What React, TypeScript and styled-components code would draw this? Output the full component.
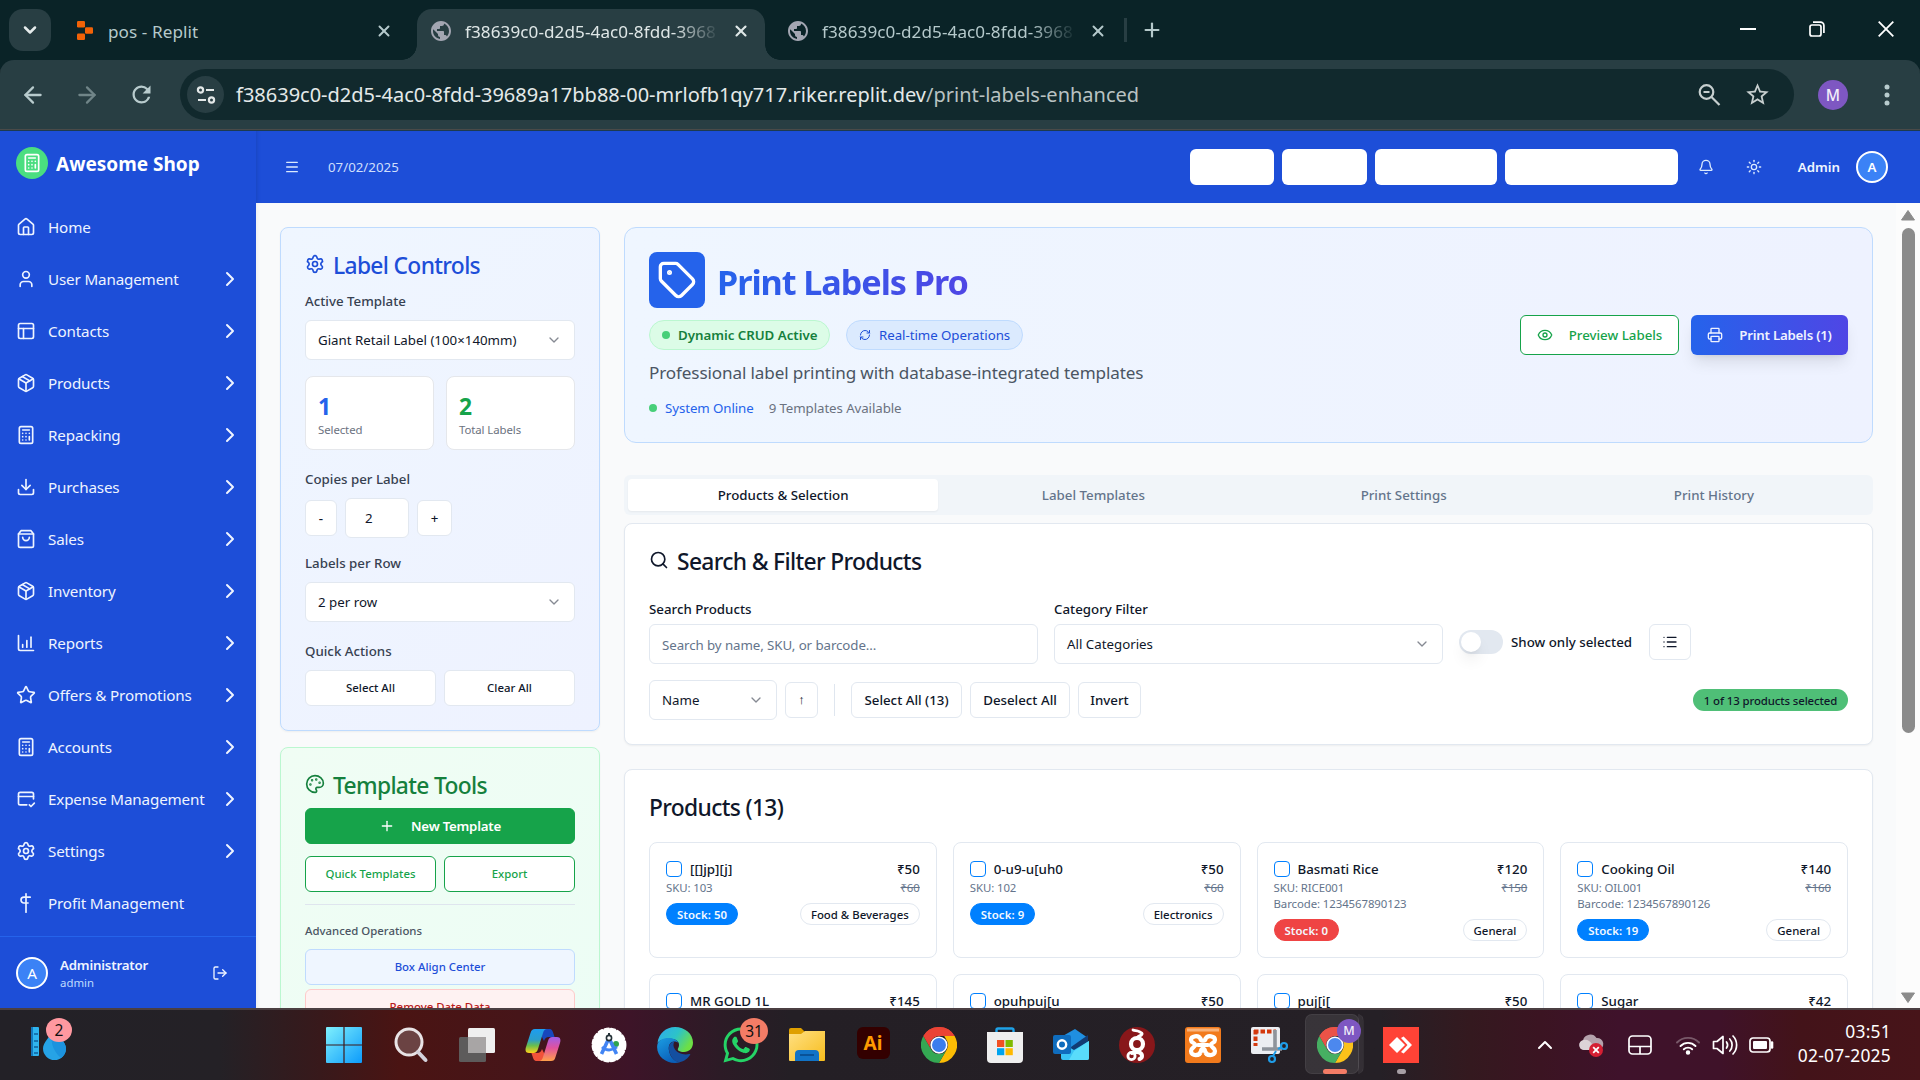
import React from "react";
import styled, { createGlobalStyle, css } from "styled-components";
import {
  House, User, PanelsTopLeft, Package, Calculator, Download, ChartColumnIncreasing, Star, Settings, LogOut,
  ChevronRight, ChevronDown, ChevronUp, Bell, Sun, Menu, Palette, Plus, Tag, RefreshCw, Eye, Printer, Search, List,
  ArrowLeft, ArrowRight, X,
} from "lucide-react";
import { FaWhatsapp } from "react-icons/fa";
import { MdStarBorder, MdRefresh, MdPublic } from "react-icons/md";

const Global = createGlobalStyle`
  *, *::before, *::after { box-sizing: border-box; }
  body { margin: 0; overflow: hidden; }
  #root { font-family: "Noto Sans", "Open Sans", "DejaVu Sans", sans-serif; }
  svg { display: block; flex-shrink: 0; }
`;

const Screen = styled.div`
  width: 1920px;
  height: 1080px;
  display: flex;
  flex-direction: column;
  overflow: hidden;
  white-space: nowrap;
  font-size: 13.3px;
  line-height: 20px;
  color: #0f172a;
`;

/* ---------- browser ---------- */

const TabStrip = styled.div`
  height: 60px;
  background: #0a2327;
  display: flex;
  align-items: flex-start;
  padding-left: 9px;
  color: #b5c9cb;
`;
const TabSearch = styled.div`
  width: 42px;
  height: 42px;
  margin: 9px 17px 0 0;
  border-radius: 14px;
  background: #283e43;
  color: #e6ecec;
  display: flex;
  align-items: center;
  justify-content: center;
`;
const Tab = styled.div<{ $w: number; $pad: number; $end: number; $gap?: number; $active?: boolean }>`
  position: relative;
  width: ${(p) => p.$w}px;
  height: 51px;
  margin-top: 9px;
  padding: 0 ${(p) => p.$end}px 8px ${(p) => p.$pad}px;
  display: flex;
  align-items: center;
  gap: ${(p) => p.$gap ?? 12}px;
  font-size: 17.1px;
  ${(p) => p.$active && css`
    background: #283e43;
    color: #dfe7e7;
    border-radius: 15px 15px 0 0;
    &::before, &::after {
      content: "";
      position: absolute;
      bottom: 0;
      width: 15px;
      height: 15px;
    }
    &::before { left: -15px; background: radial-gradient(circle at 0 0, transparent 14.5px, #283e43 15px); }
    &::after { right: -15px; background: radial-gradient(circle at 100% 0, transparent 14.5px, #283e43 15px); }
  `}
`;
const TabTitle = styled.span<{ $fade?: boolean }>`
  flex: 1;
  overflow: hidden;
  padding-top: 2px;
  line-height: 26px;
  letter-spacing: 0.005em;
  ${(p) => p.$fade && css`mask-image: linear-gradient(90deg, #000 calc(100% - 46px), transparent 100%);`}
`;
const TabDivider = styled.div`
  width: 3px;
  height: 24px;
  margin: 18px 0 0 9px;
  background: #283e43;
`;
const NewTab = styled.div`
  margin: 19px 0 0 14px;
`;
const WindowControls = styled.div`
  margin: 18px 26px 0 auto;
  display: flex;
  align-items: center;
  height: 22px;
  gap: 53px;
  color: #fff;
`;

const ToolbarBack = styled.div`
  height: 71px;
  background: #0a2327;
`;
const Toolbar = styled.div`
  height: 71px;
  background: #283e43;
  border-radius: 14px 14px 0 0;
  border-bottom: 1px solid #1d3a50;
  box-shadow: inset 0 -1px 0 #4a4a48;
  display: flex;
  align-items: flex-start;
  padding: 9px 0 0 22px;
  color: #b8cbcd;
`;
const NavButton = styled.div<{ $ml?: number; $dim?: boolean }>`
  width: 22px;
  height: 51px;
  margin-left: ${(p) => p.$ml ?? 0}px;
  display: flex;
  align-items: center;
  justify-content: center;
  opacity: ${(p) => (p.$dim ? 0.5 : 1)};
`;
const Omnibox = styled.div`
  width: 1614px;
  height: 51px;
  margin-left: 28px;
  padding: 0 23px 0 7px;
  border-radius: 26px;
  background: #11292d;
  display: flex;
  align-items: center;
  font-size: 20px;
  color: #e4e9e9;
`;
const SiteChip = styled.div`
  width: 37px;
  height: 37px;
  margin-right: 12px;
  border-radius: 50%;
  background: #283e43;
  display: flex;
  align-items: center;
  justify-content: center;
`;
const UrlPath = styled.span`
  flex: 1;
  color: #b9c2c2;
`;
const OmniIcons = styled.div`
  display: flex;
  align-items: center;
  gap: 23px;
  color: #c7cfcf;
`;
const ProfileDot = styled.div<{ $size: number }>`
  width: ${(p) => p.$size}px;
  height: ${(p) => p.$size}px;
  border-radius: 50%;
  background: #7e57c2;
  color: #f3effa;
  font-size: ${(p) => p.$size * 0.52}px;
  font-weight: 500;
  display: flex;
  align-items: center;
  justify-content: center;
`;
const ProfileSlot = styled.div`
  margin: 11px 0 0 24px;
`;
const KebabSlot = styled.div`
  margin: 14px 0 0 36px;
`;

/* ---------- application shell ---------- */

const Page = styled.div`
  height: 877px;
  display: flex;
  overflow: hidden;
`;
const Sidebar = styled.aside`
  width: 256px;
  background: #1d4ed8;
  color: #eef4ff;
  display: flex;
  flex-direction: column;
`;
const Brand = styled.div`
  height: 64px;
  padding: 0 16px;
  display: flex;
  align-items: center;
  gap: 8px;
  color: #fff;
  font-size: 19px;
  font-weight: 700;
`;
const BrandName = styled.span`
  padding-top: 2px;
`;
const BrandMark = styled.div`
  width: 32px;
  height: 32px;
  border-radius: 50%;
  background: #4ade80;
  display: flex;
  align-items: center;
  justify-content: center;
`;
const Nav = styled.nav`
  flex: 1;
  padding-top: 6px;
`;
const NavItem = styled.div`
  height: 52px;
  padding: 0 14px 0 16px;
  display: flex;
  align-items: center;
  gap: 12px;
  font-size: 15.2px;
  letter-spacing: -0.01em;
`;
const NavLabel = styled.span`
  flex: 1;
  width: 0;
`;
const UserBox = styled.div`
  height: 72px;
  border-top: 1px solid #2563eb;
  padding: 1px 28px 0 16px;
  display: flex;
  align-items: center;
  gap: 12px;
`;
const UserText = styled.div`
  flex: 1;
`;
const UserName = styled.div`
  font-weight: 600;
  letter-spacing: -0.015em;
  line-height: 20px;
`;
const UserRole = styled.div`
  font-size: 11.4px;
  line-height: 16px;
  color: #bfdbfe;
`;
const Avatar = styled.div<{ $bold?: boolean }>`
  width: 32px;
  height: 32px;
  border-radius: 50%;
  border: 2px solid #fff;
  background: #3b82f6;
  color: #fff;
  font-size: ${(p) => (p.$bold ? 13.3 : 15.2)}px;
  font-weight: ${(p) => (p.$bold ? 600 : 400)};
  display: flex;
  align-items: center;
  justify-content: center;
`;
const Main = styled.div`
  width: 1664px;
  display: flex;
  flex-direction: column;
`;
const TopBar = styled.header`
  height: 72px;
  flex-shrink: 0;
  background: #1d4ed8;
  box-shadow: inset 4px 0 4px -3px rgba(0, 0, 0, 0.12);
  display: flex;
  align-items: center;
  padding: 0 32px 0 28px;
  color: #dbeafe;
`;
const DateText = styled.span`
  margin-left: 28px;
  flex: 1;
  color: #cfdffc;
`;
const BlankButtons = styled.div`
  display: flex;
  gap: 8px;
  margin-right: 20px;
`;
const BlankButton = styled.div<{ $w: number }>`
  width: ${(p) => p.$w}px;
  height: 36px;
  border-radius: 6px;
  background: #fff;
`;
const TopIcons = styled.div`
  display: flex;
  gap: 32px;
  margin-right: 36px;
`;
const AdminName = styled.span`
  font-weight: 600;
  margin-right: 16px;
  color: #eff6ff;
`;
const Body = styled.div`
  flex: 1;
  min-height: 0;
  display: flex;
  background: #f9fafb;
`;
const Content = styled.div`
  width: 1640px;
  padding: 24px 23px 0 24px;
  display: flex;
  gap: 24px;
  align-items: flex-start;
  box-shadow: inset 3px 0 4px -2px rgba(0, 0, 0, 0.06);
`;
const Scrollbar = styled.div`
  width: 24px;
  padding: 6px 0 4px;
  background: #fcfcfc;
  display: flex;
  flex-direction: column;
  align-items: center;
`;
const Thumb = styled.div`
  width: 13px;
  height: 505px;
  margin: 7px 0 auto;
  border-radius: 7px;
  background: #8b8b8b;
`;

/* ---------- left column ---------- */

const LeftColumn = styled.div`
  width: 320px;
  display: flex;
  flex-direction: column;
  gap: 16px;
`;
const tones = {
  blue: css`border-color: #bfdbfe; background: linear-gradient(135deg, #eff6ff, #eef2ff);`,
  green: css`border-color: #bbf7d0; background: linear-gradient(135deg, #f0fdf4, #ecfdf5);`,
  plain: css`border-color: #e2e8f0; background: #fff;`,
};
const Card = styled.section<{ $tone: keyof typeof tones; $h: number; $mt?: number }>`
  height: ${(p) => p.$h}px;
  margin-top: ${(p) => p.$mt ?? 0}px;
  padding: 24px;
  border: 1px solid;
  border-radius: 8px;
  box-shadow: 0 1px 2px rgba(0, 0, 0, 0.05);
  ${(p) => tones[p.$tone]}
`;
const CardTitle = styled.h2<{ $color?: string }>`
  margin: 0;
  height: 24px;
  padding-top: 4px;
  display: flex;
  align-items: center;
  gap: 8px;
  font-size: 22.8px;
  line-height: 24px;
  font-weight: 500;
  letter-spacing: -0.029em;
  color: ${(p) => p.$color ?? "#0f172a"};
  svg { margin-bottom: 4px; }
`;
const FieldLabel = styled.div<{ $mt: number; $dark?: boolean; $mb?: number }>`
  margin: ${(p) => p.$mt}px 0 ${(p) => p.$mb ?? 9}px;
  font-weight: 500;
  color: ${(p) => (p.$dark ? "#0f172a" : "#374151")};
`;
const SmallLabel = styled.div`
  margin: 17px 0 9px;
  font-size: 11.4px;
  line-height: 18px;
  font-weight: 500;
  color: #4b5563;
`;
const Select = styled.div<{ $w?: string }>`
  width: ${(p) => p.$w ?? "100%"};
  height: 40px;
  padding: 0 12px;
  border: 1px solid #e2e8f0;
  border-radius: 6px;
  background: #fff;
  display: flex;
  align-items: center;
  justify-content: space-between;
  svg { opacity: 0.5; }
`;
const TextInput = styled(Select)`
  color: #64748b;
  padding-top: 2px;
  letter-spacing: -0.006em;
`;
const CountInput = styled(Select)`
  padding-left: 19px;
`;
const Pair = styled.div<{ $gap: number; $mt?: number }>`
  display: grid;
  grid-template-columns: 1fr 1fr;
  gap: ${(p) => p.$gap}px;
  margin-top: ${(p) => p.$mt ?? 0}px;
`;
const Stat = styled.div`
  height: 74px;
  padding: 16px 12px 0;
  border: 1px solid #e5e7eb;
  border-radius: 8px;
  background: #fff;
`;
const StatValue = styled.div<{ $color: string }>`
  font-size: 22.8px;
  line-height: 28px;
  font-weight: 700;
  color: ${(p) => p.$color};
`;
const StatName = styled.div`
  font-size: 11.4px;
  line-height: 18px;
  letter-spacing: -0.007em;
  color: #6b7280;
`;
const Stepper = styled.div`
  display: flex;
  align-items: center;
  gap: 8px;
`;
const buttonTones = {
  plain: css`border-color: #e2e8f0; background: #fff; color: #0f172a;`,
  outlineGreen: css`border-color: #16a34a; background: #fff; color: #16a34a;`,
  green: css`border-color: #16a34a; background: #16a34a; color: #fff;`,
  blueSoft: css`border-color: #bfdbfe; background: #eff6ff; color: #1d4ed8;`,
  redSoft: css`border-color: #fecaca; background: #fef2f2; color: #b91c1c;`,
  gradient: css`
    border: 0;
    color: #eef2ff;
    background: linear-gradient(90deg, #2563eb, #4f46e5);
    box-shadow: 0 10px 15px -3px rgba(0, 0, 0, 0.1), 0 4px 6px -4px rgba(0, 0, 0, 0.1);
  `,
};
const Button = styled.div<{ $tone?: keyof typeof buttonTones; $w?: number; $h?: number; $mt?: number; $small?: boolean; $weight?: number }>`
  ${(p) => p.$w && css`width: ${p.$w}px;`}
  height: ${(p) => p.$h ?? 36}px;
  margin-top: ${(p) => p.$mt ?? 0}px;
  border: 1px solid;
  border-radius: 6px;
  display: flex;
  align-items: center;
  justify-content: center;
  gap: 16px;
  font-size: ${(p) => (p.$small ? 11.4 : 13.3)}px;
  font-weight: ${(p) => p.$weight ?? 500};
  ${(p) => p.$weight === 600 && css`letter-spacing: -0.018em;`}
  ${(p) => buttonTones[p.$tone ?? "plain"]}
`;
const SortArrow = styled.span`
  font-family: "Liberation Sans", sans-serif;
  font-size: 13px;
`;
const Rule = styled.div`
  height: 1px;
  margin-top: 12px;
  background: #dfe5ee;
`;

/* ---------- right column ---------- */

const RightColumn = styled.div`
  width: 1249px;
`;
const Hero = styled.section`
  height: 216px;
  padding: 24px;
  border: 1px solid #bfdbfe;
  border-radius: 12px;
  background: linear-gradient(90deg, #eff6ff, #eef2ff);
  display: flex;
  align-items: center;
  justify-content: space-between;
`;
const HeroText = styled.div`
  align-self: flex-start;
`;
const HeroHead = styled.div`
  display: flex;
  align-items: center;
  gap: 12px;
`;
const HeroMark = styled.div`
  width: 56px;
  height: 56px;
  border-radius: 8px;
  background: #2563eb;
  color: #fff;
  display: flex;
  align-items: center;
  justify-content: center;
`;
const HeroTitle = styled.h1`
  margin: 0;
  padding-top: 4px;
  font-size: 34.2px;
  line-height: 44px;
  font-weight: 700;
  letter-spacing: -0.031em;
  background: linear-gradient(90deg, #2563eb, #4f46e5);
  background-clip: text;
  color: transparent;
`;
const HeroBadges = styled.div`
  display: flex;
  gap: 16px;
  margin-top: 12px;
`;
const HeroBadge = styled.div<{ $w: number; $kind: "green" | "blue" }>`
  width: ${(p) => p.$w}px;
  height: 30px;
  padding-left: 12px;
  border: 1px solid;
  border-radius: 15px;
  display: flex;
  align-items: center;
  gap: 8px;
  ${(p) => p.$kind === "green"
    ? css`background: #dcfce7; border-color: #bbf7d0; color: #15803d; font-weight: 600; letter-spacing: -0.002em;`
    : css`background: #dbeafe; border-color: #bfdbfe; color: #1d4ed8; letter-spacing: -0.004em;`}
`;
const Dot = styled.span`
  width: 8px;
  height: 8px;
  border-radius: 50%;
  background: #48cf79;
`;
const Tagline = styled.p`
  margin: 9px 0 11px;
  font-size: 17.1px;
  line-height: 28px;
  letter-spacing: -0.007em;
  color: #4b5563;
`;
const Status = styled.div`
  display: flex;
  align-items: center;
  gap: 8px;
  letter-spacing: -0.007em;
  color: #2563eb;
`;
const StatusNote = styled.span`
  margin-left: 7px;
  color: #6b7280;
`;
const HeroActions = styled.div`
  display: flex;
  gap: 12px;
`;
const Tabs = styled.div`
  margin: 32px 0 8px;
  height: 40px;
  padding: 4px;
  border-radius: 6px;
  background: #f1f5f9;
  display: grid;
  grid-template-columns: repeat(4, 1fr);
`;
const TabButton = styled.div<{ $on?: boolean }>`
  display: flex;
  align-items: center;
  justify-content: center;
  border-radius: 4px;
  font-weight: 500;
  color: ${(p) => (p.$on ? "#0f172a" : "#64748b")};
  ${(p) => p.$on && css`background: #fff; box-shadow: 0 1px 2px rgba(0, 0, 0, 0.05);`}
`;
const FilterGrid = styled.div`
  display: grid;
  grid-template-columns: repeat(3, 1fr);
  gap: 16px;
`;
const Field = styled.div``;
const ToggleRow = styled.div`
  height: 36px;
  margin-top: 52px;
  display: flex;
  align-items: center;
  font-weight: 500;
`;
const Switch = styled.div`
  width: 44px;
  height: 24px;
  margin-right: 8px;
  padding: 2px;
  border-radius: 12px;
  background: #e2e8f0;
`;
const Knob = styled.div`
  width: 20px;
  height: 20px;
  border-radius: 50%;
  background: #fff;
  box-shadow: 0 10px 15px -3px rgba(0, 0, 0, 0.1), 0 4px 6px -4px rgba(0, 0, 0, 0.1);
`;
const ToggleText = styled.span`
  width: 138px;
`;
const SortRow = styled.div`
  margin-top: 16px;
  display: flex;
  align-items: center;
  gap: 8px;
`;
const VRule = styled.div`
  width: 1px;
  height: 32px;
  margin: 0 8px;
  background: #dfe6ef;
`;
const CountBadge = styled.div`
  width: 155px;
  height: 22px;
  margin-left: auto;
  border-radius: 11px;
  background: #4fbf77;
  font-size: 11.4px;
  font-weight: 500;
  letter-spacing: -0.009em;
  padding-top: 1px;
  display: flex;
  align-items: center;
  justify-content: center;
`;
const ProductGrid = styled.div`
  margin-top: 24px;
  display: grid;
  grid-template-columns: repeat(4, 1fr);
  grid-auto-rows: 116px;
  gap: 16px;
`;
const Product = styled.article`
  padding: 16px;
  border: 1px solid #e2e8f0;
  border-radius: 8px;
`;
const ProductHead = styled.div`
  display: flex;
  align-items: center;
  font-weight: 500;
`;
const Checkbox = styled.span`
  width: 16px;
  height: 16px;
  margin-right: 8px;
  border: 1px solid #0080ff;
  border-radius: 4px;
`;
const Price = styled.span`
  margin-left: auto;
`;
const ProductMeta = styled.div`
  display: flex;
  justify-content: space-between;
  font-size: 11.4px;
  height: 16px;
  padding-top: 1px;
  line-height: 16px;
  letter-spacing: -0.007em;
  color: #64748b;
`;
const ProductBadges = styled.div`
  margin-top: 8px;
  display: flex;
  justify-content: space-between;
`;
const Pill = styled.span<{ $bg?: string }>`
  height: 22px;
  padding: 0 10px;
  border: 1px solid ${(p) => p.$bg ?? "#e2e8f0"};
  border-radius: 11px;
  background: ${(p) => p.$bg ?? "#fff"};
  color: ${(p) => (p.$bg ? "#f3f8ff" : "#0f172a")};
  font-size: 11.4px;
  line-height: 21px;
  letter-spacing: ${(p) => (p.$bg ? "0.006em" : "0")};
  font-weight: ${(p) => (p.$bg ? 600 : 500)};
`;

/* ---------- taskbar ---------- */

const Taskbar = styled.footer`
  height: 72px;
  border-top: 2px solid #4b3f42;
  display: flex;
  align-items: center;
  background: linear-gradient(90deg, #232127 0, #242126 220px, #38191b 320px, #4a1413 400px, #461519 520px, #3d1428 630px,
    #2c1b26 720px, #241f25 790px, #252026 1380px, #34191f 1470px, #3b1422 1540px, #3f122b 1620px, #3f1229 1720px, #431319 1800px, #471419 1920px);
`;
const Weather = styled.div`
  width: 48px;
  margin-left: 24px;
  position: relative;
`;
const Launcher = styled.div`
  margin-left: 237px;
  display: flex;
`;
const AppCell = styled.div<{ $w?: number }>`
  position: relative;
  width: ${(p) => p.$w ?? 66}px;
  height: 70px;
  display: flex;
  align-items: center;
  justify-content: center;
`;
const ActiveCell = styled.div`
  position: absolute;
  left: 3px;
  top: 4px;
  width: 54px;
  height: 60px;
  border-radius: 7px;
  background: rgba(255, 255, 255, 0.09);
  border: 1px solid rgba(255, 255, 255, 0.06);
  &::after {
    content: "";
    position: absolute;
    left: 46px;
    top: -1px;
    width: 12px;
    height: 60px;
    border-radius: 0 7px 7px 0;
    border-right: 1px solid rgba(255, 255, 255, 0.06);
    background: linear-gradient(90deg, transparent 6px, rgba(255, 255, 255, 0.07) 6px);
  }
`;
const CountBubble = styled.div<{ $bg: string; $x: number; $y: number; $w: number }>`
  position: absolute;
  left: ${(p) => p.$x}px;
  top: ${(p) => p.$y}px;
  width: ${(p) => p.$w}px;
  height: ${(p) => p.$w - 2}px;
  border-radius: 50%;
  background: ${(p) => p.$bg};
  color: #111;
  font-size: 15.5px;
  display: flex;
  align-items: center;
  justify-content: center;
`;
const ProfileOnApp = styled.div`
  position: absolute;
  left: 35px;
  top: 9px;
`;
const RunMark = styled.div<{ $w: number; $color: string }>`
  position: absolute;
  bottom: 6px;
  width: ${(p) => p.$w}px;
  height: 5px;
  border-radius: 3px;
  background: ${(p) => p.$color};
`;
const AiTile = styled.div`
  width: 33px;
  height: 32px;
  margin-bottom: 5px;
  border-radius: 6px;
  background: #330000;
  color: #ff9a00;
  font-size: 19px;
  font-weight: 700;
  display: flex;
  align-items: center;
  justify-content: center;
`;
const Tray = styled.div`
  margin-left: auto;
  padding-right: 29px;
  display: flex;
  align-items: center;
  color: #fff;
`;
const TrayIcon = styled.div<{ $w: number }>`
  width: ${(p) => p.$w}px;
  display: flex;
  justify-content: center;
`;
const Clock = styled.div`
  width: 98px;
  margin-left: 8px;
  padding-bottom: 4px;
  text-align: right;
  font-size: 17.4px;
  line-height: 24px;
  letter-spacing: 0.014em;
`;

/* ---------- drawings ---------- */

type S = { d: string[]; size?: number };
const Strokes = ({ d, size = 20 }: S) => (
  <svg width={size} height={size} viewBox="0 0 24 24" fill="none" stroke="currentColor" strokeWidth={2} strokeLinecap="round" strokeLinejoin="round">
    {d.map((p) => <path key={p} d={p} />)}
  </svg>
);
const ShopBag = () => <Strokes d={["M6 2 3 6v14a2 2 0 0 0 2 2h14a2 2 0 0 0 2-2V6l-3-4Z", "M3 6h18", "M16 10a4 4 0 0 1-8 0"]} />;
const CardCheck = () => <Strokes d={["M21 12V6a2 2 0 0 0-2-2H5a2 2 0 0 0-2 2v11a2 2 0 0 0 2 2h8", "M3 9h18", "m16 19 2 2 4-4"]} />;
const Profit = () => <Strokes d={["M12 1v22", "M17 5H9.5a3.5 3.5 0 0 0 0 7h5"]} />;

const ReplitIcon = () => (
  <svg width="16" height="19" viewBox="0 0 16 19" fill="#f26207">
    <rect width="8" height="6.4" rx="1.2" /><rect x="8" y="6.3" width="8" height="6.4" rx="1.2" /><rect y="12.6" width="8" height="6.4" rx="1.2" />
  </svg>
);
const Tune = () => (
  <svg width="20" height="20" viewBox="0 0 20 20" fill="none" stroke="#e3e8e8" strokeWidth="2.2">
    <circle cx="4.5" cy="5" r="2.6" /><path d="M10 5h8M2 15h8" /><circle cx="15.5" cy="15" r="2.6" />
  </svg>
);
const ZoomOut = () => (
  <svg width="24" height="24" viewBox="0 0 24 24" fill="none" stroke="currentColor" strokeWidth="2.2">
    <circle cx="9.5" cy="9" r="6.8" /><path d="M14.5 14l8 8M6.5 9h6" />
  </svg>
);
const Restore = () => (
  <svg width="16" height="16" viewBox="0 0 16 16" fill="none" stroke="#fff" strokeWidth="1.7">
    <rect x="1" y="4" width="11" height="11" rx="2" /><path d="M4 1.2h7.5a3.4 3.4 0 0 1 3.4 3.4V12" />
  </svg>
);
const ChromeLogo = ({ size = 36 }: { size?: number }) => (
  <svg width={size} height={size} viewBox="0 0 48 48">
    <path fill="#ea4335" d="M24 0a24 24 0 0 1 20.8 12H24a12 12 0 0 0-10.4 6L3.2 12A24 24 0 0 1 24 0Z" />
    <path fill="#fbbc04" d="M44.8 12A24 24 0 0 1 24 48l10.4-18A12 12 0 0 0 34.4 18L31 12Z" />
    <path fill="#34a853" d="M3.2 12 13.6 30A12 12 0 0 0 34.4 30L24 48A24 24 0 0 1 3.2 12Z" />
    <path fill="#ea4335" d="M24 12h20.8A24 24 0 0 0 3.2 12l10.4 18A12 12 0 0 1 24 12Z" />
    <circle cx="24" cy="24" r="11.5" fill="#fff" /><circle cx="24" cy="24" r="9.3" fill="#3b7ded" />
  </svg>
);
const WeatherIcon = () => (
  <svg width="44" height="40" viewBox="0 0 44 40">
    <rect x="7" y="2" width="8" height="29" rx="1" fill="#2fb4ee" /><path d="M7 2h2v29H7z" fill="#1479be" />
    <path d="M10 9h4M10 16h4M10 22h4M10 28h4" stroke="#0f5f9c" strokeWidth="1.6" />
    <path d="M30 2c5 11 12 15 12 21.500a11.500 11.500 0 0 1-23 0C19 17 26 13 30 2Z" fill="#26a3e6" />
    <path d="M30 2c5 11 12 15 12 21.500a11.500 11.500 0 0 1-5 9.500c-9-8-12-18-7-31Z" fill="#1c93de" />
  </svg>
);
const StartIcon = () => (
  <svg width="36" height="36" viewBox="0 0 36 36">
    <defs><linearGradient id="win" x1="0" y1="0" x2="1" y2="1"><stop stopColor="#7ff0fd" /><stop offset="1" stopColor="#0c9bfb" /></linearGradient></defs>
    <path fill="url(#win)" d="M1 0h16.4v17.4H0V1a1 1 0 0 1 1-1ZM18.6 0H35a1 1 0 0 1 1 1v16.4H18.6ZM0 18.6h17.4V36H1a1 1 0 0 1-1-1ZM18.6 18.6H36V35a1 1 0 0 1-1 1H18.6Z" />
  </svg>
);
const SearchIcon = () => (
  <svg width="36" height="36" viewBox="0 0 36 36" fill="none">
    <circle cx="16" cy="15" r="13" fill="#6b4343" stroke="#e9e4e6" strokeWidth="3" />
    <path d="M25 25l7.5 8" stroke="#d5d3dc" strokeWidth="4" strokeLinecap="round" />
  </svg>
);
const TaskViewIcon = () => (
  <svg width="36" height="36" viewBox="0 0 36 36">
    <rect y="10" width="27" height="25" rx="1.5" fill="#5d5b5b" /><rect x="9" y="1" width="27" height="25" rx="1.5" fill="#efefef" /><path d="M9 10h18v16H9z" fill="#a8a5a5" />
  </svg>
);
const CopilotIcon = () => (
  <svg width="36" height="34" viewBox="0 0 36 34">
    <defs>
      <linearGradient id="cpa" x1="0" y1="0" x2="0" y2="1"><stop stopColor="#1d9df0" /><stop offset=".45" stopColor="#2b9ecb" /><stop offset=".7" stopColor="#6cbf4a" /><stop offset="1" stopColor="#ffd21a" /></linearGradient>
      <linearGradient id="cpb" x1="0" y1="0" x2="0" y2="1"><stop stopColor="#a05de8" /><stop offset=".45" stopColor="#e0529e" /><stop offset="1" stopColor="#ffa04a" /></linearGradient>
    </defs>
    <path d="M19 1h5c3 0 3.6 2 4.4 4.5L29.6 9H24c-3 0-4 1.5-5 4l-3-6Z" fill="#1747bd" />
    <path d="M17 33h-5c-3 0-3.6-2-4.4-4.5L6.4 25H12c3 0 4-1.500 5-4l3 6Z" fill="#f0523a" />
    <path d="M10 1h12c-2 0-3.300 1.600-4 4l-5 16c-.8 2.600-2 4-4.500 4H4c-3.500 0-4-3-3-6L5.500 5C6.400 2 7.500 1 10 1Z" fill="url(#cpa)" />
    <path d="M26 33H14c2 0 3.300-1.600 4-4l5-16c.8-2.600 2-4 4.500-4H32c3.500 0 4 3 3 6l-4.500 14c-.9 3-2 4-4.500 4Z" fill="url(#cpb)" />
  </svg>
);
const StudioIcon = () => (
  <svg width="36" height="36" viewBox="0 0 36 36" fill="none">
    <circle cx="18" cy="18" r="16.200" fill="#fff" stroke="#fff" strokeWidth="2.500" strokeDasharray="4 2.500" strokeLinecap="round" />
    <circle cx="25" cy="17" r="3" fill="#30a350" />
    <path d="M18 11 10.500 27M18 11l7.500 16" stroke="#4285f4" strokeWidth="3.600" /><path d="M11 20c4 4 10 4 15 0" stroke="#4285f4" strokeWidth="2.800" />
    <circle cx="18" cy="11" r="2.600" fill="#fff" stroke="#253238" strokeWidth="1.600" /><path d="M18 6v3" stroke="#253238" strokeWidth="2" />
  </svg>
);
const EdgeIcon = () => (
  <svg width="36" height="36" viewBox="0 0 36 36">
    <defs>
      <linearGradient id="eg" x1="0" y1="0" x2="1" y2=".5"><stop stopColor="#2fa9ef" /><stop offset=".55" stopColor="#2cc3c9" /><stop offset="1" stopColor="#6ddf45" /></linearGradient>
      <linearGradient id="eb" x1="0" y1="0" x2=".6" y2="1"><stop stopColor="#1b9de2" /><stop offset="1" stopColor="#0a5eb8" /></linearGradient>
    </defs>
    <path fill="url(#eg)" d="M.5 16C1.600 6.500 9 0 18 0c10 0 18 7 18 15.500 0 6-4 9.500-9 9.500-4.500 0-7-1.700-6-3.500 2.500-4 .5-9-5-9.500C9 11.400 3 12.500.500 16Z" />
    <path fill="url(#eb)" d="M.300 18C1 13.500 6 11 11 11c5 0 9 1.500 10.500 5-1-1-2.500-1.500-4.500-1.500-4 0-6 4.500-5 9C13 30 17.500 34.500 23 35.300 11 38.500-1.500 30 .300 18Z" />
    <path fill="#134fa0" d="M12 23c-.700-5 2-8.500 5.500-8.500-1.500 2-1.500 5 .5 8 2.500 3.500 8 6 14.500 4.500.8-.2 1 .2.600.8-2 3.500-6 6.600-10.600 7.500C17 34.500 12.700 29 12 23Z" />
  </svg>
);
const FolderIcon = () => (
  <svg width="36" height="34" viewBox="0 0 36 34">
    <path d="M0 2a2 2 0 0 1 2-2h10l4 4v8H0z" fill="#dfa000" />
    <defs><linearGradient id="fo" x1="0" y1="0" x2="1" y2="1"><stop stopColor="#ffe083" /><stop offset="1" stopColor="#f7bd1d" /></linearGradient></defs>
    <path d="M0 6h12l4-3h20v29a1 1 0 0 1-1 1H1a1 1 0 0 1-1-1z" fill="url(#fo)" />
    <path d="M6 33v-7a4 4 0 0 1 4-4h16a4 4 0 0 1 4 4v7z" fill="#1173c6" /><path d="M11 27h14" stroke="#0a4f92" strokeWidth="1.800" />
  </svg>
);
const StoreIcon = () => (
  <svg width="36" height="36" viewBox="0 0 36 36">
    <path d="M9.500 7V3a1.500 1.500 0 0 1 1.500-1.500h14A1.500 1.500 0 0 1 26.500 3v4" fill="none" stroke="#1ea2e8" strokeWidth="2.400" />
    <path d="M0 5h36v27a4 4 0 0 1-4 4H4a4 4 0 0 1-4-4z" fill="#efefef" />
    <path d="M10 13h7.300v7H10z" fill="#f25022" /><path d="M18.500 13h7.300v7h-7.300z" fill="#7fba00" /><path d="M10 21.200h7.300v7H10z" fill="#00a4ef" /><path d="M18.500 21.200h7.300v7h-7.300z" fill="#ffb900" />
  </svg>
);
const OutlookIcon = () => (
  <svg width="36" height="32" viewBox="0 0 36 32">
    <path d="M8 8 22 0l13 9v6L20 22 8 14z" fill="#1f8fe0" /><path d="M18 18 35 6v9l-16 9z" fill="#123b73" />
    <path d="M8 14l13 7 15-9v17a2 2 0 0 1-2 2H10a2 2 0 0 1-2-2z" fill="#39c4f5" /><path d="M36 12v17a2 2 0 0 1-2 2H16l5-9z" fill="#59dcfb" />
    <rect y="6" width="18" height="19" rx="2" fill="#0f6cbd" /><circle cx="9" cy="15.500" r="4.200" fill="none" stroke="#fff" strokeWidth="2.400" />
  </svg>
);
const DragonIcon = () => (
  <svg width="36" height="36" viewBox="0 0 36 36" fill="none">
    <circle cx="18" cy="18" r="18" fill="#88171a" />
    <path d="M14 3c2 1 4 0 6 1.500 3 1.500 4 2 2.500 3.500-1.500 1-3 .500-4 2.500" stroke="#fff" strokeWidth="2.800" strokeLinecap="round" />
    <circle cx="18" cy="17" r="6" stroke="#fff" strokeWidth="4.200" /><circle cx="12.500" cy="29" r="3.600" stroke="#fff" strokeWidth="2.800" /><path d="M13 26c5-2 10-.500 10 3 0 1.500-1 2.500-2.500 3" stroke="#fff" strokeWidth="4" strokeLinecap="round" />
  </svg>
);
const XamppIcon = () => (
  <svg width="36" height="36" viewBox="0 0 36 36" fill="none">
    <rect width="36" height="36" rx="3" fill="#f27a1c" /><path d="M2 1.500h32v3H2z" fill="#f9b27a" />
    <g stroke="#fff" strokeWidth="4.200" strokeLinecap="round" strokeLinejoin="round">
      <path d="M15.500 12c-2-4.500-9.500-3-9.500 1 0 3 4 2.500 4 5s-4 2.500-4 6c0 5.500 9 5.500 10 0M20.500 12c2-4.500 9.500-3 9.500 1 0 3-4 2.500-4 5s4 2.500 4 6c0 5.500-9 5.500-10 0M15.500 11.500c0 3 5 3 5 0M16 24.500c0-3.500 4-3.500 4 0M13 18h10" />
    </g>
  </svg>
);
const SnipIcon = () => (
  <svg width="38" height="38" viewBox="0 0 38 38" fill="none">
    <rect x="1" y="1" width="29" height="27" rx="2" fill="#eceef2" />
    <path d="M4 5.500h22M5.500 4v16" stroke="#d4380d" strokeWidth="4" strokeDasharray="4.500 2" />
    <path d="M25 4v20M12 23h20" stroke="#8e949c" strokeWidth="3.600" />
    <circle cx="34" cy="20" r="3" stroke="#1f9de8" strokeWidth="2.200" /><circle cx="22" cy="33" r="3" stroke="#1f9de8" strokeWidth="2.200" /><path d="M26 25l-3 5M28 23l3-1.500" stroke="#1f9de8" strokeWidth="2" />
  </svg>
);
const AnyDeskIcon = () => (
  <svg width="36" height="36" viewBox="0 0 36 36"><path d="M0 0h36v36H0z" fill="#ff4336" /><path d="m6 18 8-8 8 8-8 8zM18 11l2.600-1.600L29 18l-8.400 8.600L18 25l6.500-7z" fill="#fff" /></svg>
);
const CloudIcon = () => (
  <svg width="26" height="26" viewBox="0 0 26 26">
    <path d="M6 18a5 5 0 0 1-1-9.800A7.500 7.500 0 0 1 18.500 6 6 6 0 0 1 20 18Z" fill="#b5a2ac" /><path d="M6 18a5 5 0 0 1-1-9.800c4-1.200 7 1 9 3.800l3 6Z" fill="#dcd3d8" />
    <circle cx="18" cy="18" r="7" fill="#d51f33" /><path d="m15.200 15.200 5.600 5.600m0-5.600-5.600 5.600" stroke="#fff" strokeWidth="1.800" />
  </svg>
);
const TouchpadIcon = () => (
  <svg width="24" height="20" viewBox="0 0 24 20" fill="none" stroke="#fff" strokeWidth="1.700"><rect x="1" y="1" width="22" height="18" rx="3.500" /><path d="M1 11.500h22M12 11.500V19" /></svg>
);
const WifiIcon = () => (
  <svg width="24" height="20" viewBox="0 0 24 20" fill="none" stroke="#fff" strokeWidth="1.900" strokeLinecap="round">
    <path d="M1 7.500a15.500 15.500 0 0 1 22 0" opacity=".3" /><path d="M4.500 11a10.600 10.600 0 0 1 15 0M7.800 14.300a6 6 0 0 1 8.400 0" /><circle cx="12" cy="17.500" r="1.300" fill="#fff" />
  </svg>
);
const SoundIcon = () => (
  <svg width="26" height="22" viewBox="0 0 26 22" fill="none" stroke="#fff" strokeWidth="1.700" strokeLinecap="round" strokeLinejoin="round">
    <path d="M1.500 7.500h3.500L11 2.500v17L5 14.500H1.500ZM14.500 8a5 5 0 0 1 0 6M17.800 5a9 9 0 0 1 0 12M21 2a13 13 0 0 1 0 18" />
  </svg>
);
const BatteryIcon = () => (
  <svg width="25" height="16" viewBox="0 0 25 16" fill="none"><rect x="1" y="1" width="20" height="14" rx="3" stroke="#fff" strokeWidth="1.700" /><rect x="4" y="4" width="14" height="8" rx="1" fill="#fff" /><path d="M23 5.500v5" stroke="#fff" strokeWidth="2.600" strokeLinecap="round" /></svg>
);

/* ---------- data ---------- */

const nav: [string, React.ReactNode, boolean][] = [
  ["Home", <House size={20} />, false],
  ["User Management", <User size={20} />, true],
  ["Contacts", <PanelsTopLeft size={20} />, true],
  ["Products", <Package size={20} />, true],
  ["Repacking", <Calculator size={20} />, true],
  ["Purchases", <Download size={20} />, true],
  ["Sales", <ShopBag />, true],
  ["Inventory", <Package size={20} />, true],
  ["Reports", <ChartColumnIncreasing size={20} />, true],
  ["Offers & Promotions", <Star size={20} />, true],
  ["Accounts", <Calculator size={20} />, true],
  ["Expense Management", <CardCheck />, true],
  ["Settings", <Settings size={20} />, true],
  ["Profit Management", <Profit />, false],
];

type Item = { name: string; price: string; old: string; sku: string; barcode?: string; stock: number; category: string };
const products: Item[] = [
  { name: "[[]jp][j]", price: "₹50", old: "₹60", sku: "103", stock: 50, category: "Food & Beverages" },
  { name: "0-u9-u[uh0", price: "₹50", old: "₹60", sku: "102", stock: 9, category: "Electronics" },
  { name: "Basmati Rice", price: "₹120", old: "₹150", sku: "RICE001", barcode: "1234567890123", stock: 0, category: "General" },
  { name: "Cooking Oil", price: "₹140", old: "₹160", sku: "OIL001", barcode: "1234567890126", stock: 19, category: "General" },
];
const nextRow: [string, string][] = [["MR GOLD 1L", "₹145"], ["opuhpuj[u", "₹50"], ["puj[i[", "₹50"], ["Sugar", "₹42"]];

const host = "f38639c0-d2d5-4ac0-8fdd-39689a17bb88";
const tabTitle = "f38639c0-d2d5-4ac0-8fdd-3968";

export default function App() {
  return (
    <Screen>
      <Global />
      <TabStrip>
        <TabSearch><ChevronDown size={20} strokeWidth={3} /></TabSearch>
        <Tab $w={349} $pad={9} $end={24} $gap={15}>
          <ReplitIcon /><TabTitle>pos - Replit</TabTitle><X size={18} strokeWidth={2.6} />
        </Tab>
        <Tab $w={348} $pad={12} $end={15} $active>
          <MdPublic size={24} color="#a3a6b2" /><TabTitle $fade>{tabTitle}</TabTitle><X size={18} strokeWidth={2.8} />
        </Tab>
        <Tab $w={350} $pad={21} $end={8}>
          <MdPublic size={24} color="#a3a6b2" /><TabTitle $fade>{tabTitle}</TabTitle><X size={18} strokeWidth={2.6} />
        </Tab>
        <TabDivider />
        <NewTab><Plus size={22} strokeWidth={2.4} /></NewTab>
        <WindowControls>
          <svg width="16" height="16"><path d="M0 8h16" stroke="#fff" strokeWidth="2" /></svg>
          <Restore />
          <svg width="16" height="16"><path d="m.7.700 14.600 14.600M15.300.700.700 15.300" stroke="#fff" strokeWidth="1.800" /></svg>
        </WindowControls>
      </TabStrip>
      <ToolbarBack>
        <Toolbar>
          <NavButton><ArrowLeft size={26} strokeWidth={2.1} /></NavButton>
          <NavButton $ml={32} $dim><ArrowRight size={26} strokeWidth={2.1} /></NavButton>
          <NavButton $ml={32}><MdRefresh size={27} /></NavButton>
          <Omnibox>
            <SiteChip><Tune /></SiteChip>
            {host}-00-mrlofb1qy717.riker.replit.dev<UrlPath>/print-labels-enhanced</UrlPath>
            <OmniIcons><ZoomOut /><MdStarBorder size={27} /></OmniIcons>
          </Omnibox>
          <ProfileSlot><ProfileDot $size={30}>M</ProfileDot></ProfileSlot>
          <KebabSlot>
            <svg width="6" height="24" fill="#b8cbcd"><circle cx="3" cy="4" r="2.500" /><circle cx="3" cy="12" r="2.500" /><circle cx="3" cy="20" r="2.500" /></svg>
          </KebabSlot>
        </Toolbar>
      </ToolbarBack>

      <Page>
        <Sidebar>
          <Brand><BrandMark><Calculator size={20} /></BrandMark><BrandName>Awesome Shop</BrandName></Brand>
          <Nav>
            {nav.map(([label, icon, more]) => (
              <NavItem key={label}>{icon}<NavLabel>{label}</NavLabel>{more && <ChevronRight size={24} />}</NavItem>
            ))}
          </Nav>
          <UserBox>
            <Avatar>A</Avatar>
            <UserText><UserName>Administrator</UserName><UserRole>admin</UserRole></UserText>
            <LogOut size={16} />
          </UserBox>
        </Sidebar>

        <Main>
          <TopBar>
            <Menu size={16} />
            <DateText>07/02/2025</DateText>
            <BlankButtons><BlankButton $w={84} /><BlankButton $w={85} /><BlankButton $w={122} /><BlankButton $w={173} /></BlankButtons>
            <TopIcons><Bell size={16} /><Sun size={16} /></TopIcons>
            <AdminName>Admin</AdminName>
            <Avatar $bold>A</Avatar>
          </TopBar>
          <Body>
            <Content>
              <LeftColumn>
                <Card $tone="blue" $h={504}>
                  <CardTitle $color="#1d4ed8"><Settings size={20} />Label Controls</CardTitle>
                  <FieldLabel $mt={15}>Active Template</FieldLabel>
                  <Select>Giant Retail Label (100×140mm)<ChevronDown size={16} /></Select>
                  <Pair $gap={12} $mt={16}>
                    <Stat><StatValue $color="#2563eb">1</StatValue><StatName>Selected</StatName></Stat>
                    <Stat><StatValue $color="#16a34a">2</StatValue><StatName>Total Labels</StatName></Stat>
                  </Pair>
                  <FieldLabel $mt={19}>Copies per Label</FieldLabel>
                  <Stepper>
                    <Button $w={32}>-</Button><CountInput $w="64px">2</CountInput><Button $w={35}>+</Button>
                  </Stepper>
                  <FieldLabel $mt={15}>Labels per Row</FieldLabel>
                  <Select>2 per row<ChevronDown size={16} /></Select>
                  <FieldLabel $mt={19}>Quick Actions</FieldLabel>
                  <Pair $gap={8}><Button $small>Select All</Button><Button $small>Clear All</Button></Pair>
                </Card>
                <Card $tone="green" $h={340}>
                  <CardTitle $color="#15803d"><Palette size={20} />Template Tools</CardTitle>
                  <Button $tone="green" $mt={12} $weight={600}><Plus size={16} />New Template</Button>
                  <Pair $gap={8} $mt={12}>
                    <Button $tone="outlineGreen" $small>Quick Templates</Button><Button $tone="outlineGreen" $small>Export</Button>
                  </Pair>
                  <Rule />
                  <SmallLabel>Advanced Operations</SmallLabel>
                  <Button $tone="blueSoft" $small>Box Align Center</Button>
                  <Button $tone="redSoft" $small $mt={4}>Remove Date Data</Button>
                </Card>
              </LeftColumn>

              <RightColumn>
                <Hero>
                  <HeroText>
                    <HeroHead><HeroMark><Tag size={40} /></HeroMark><HeroTitle>Print Labels Pro</HeroTitle></HeroHead>
                    <HeroBadges>
                      <HeroBadge $kind="green" $w={181}><Dot />Dynamic CRUD Active</HeroBadge>
                      <HeroBadge $kind="blue" $w={177}><RefreshCw size={12} />Real-time Operations</HeroBadge>
                    </HeroBadges>
                    <Tagline>Professional label printing with database-integrated templates</Tagline>
                    <Status><Dot />System Online<StatusNote>9 Templates Available</StatusNote></Status>
                  </HeroText>
                  <HeroActions>
                    <Button $tone="outlineGreen" $w={159} $h={40}><Eye size={16} />Preview Labels</Button>
                    <Button $tone="gradient" $w={157} $h={40} $weight={600}><Printer size={16} />Print Labels (1)</Button>
                  </HeroActions>
                </Hero>

                <Tabs>
                  <TabButton $on>Products &amp; Selection</TabButton><TabButton>Label Templates</TabButton>
                  <TabButton>Print Settings</TabButton><TabButton>Print History</TabButton>
                </Tabs>

                <Card $tone="plain" $h={222}>
                  <CardTitle><Search size={20} />Search &amp; Filter Products</CardTitle>
                  <FilterGrid>
                    <Field>
                      <FieldLabel $mt={27} $mb={5} $dark>Search Products</FieldLabel>
                      <TextInput>Search by name, SKU, or barcode...</TextInput>
                    </Field>
                    <Field>
                      <FieldLabel $mt={27} $mb={5} $dark>Category Filter</FieldLabel>
                      <Select>All Categories<ChevronDown size={16} /></Select>
                    </Field>
                    <ToggleRow>
                      <Switch><Knob /></Switch><ToggleText>Show only selected</ToggleText>
                      <Button $w={42}><List size={16} /></Button>
                    </ToggleRow>
                  </FilterGrid>
                  <SortRow>
                    <Select $w="128px">Name<ChevronDown size={16} /></Select>
                    <Button $w={33}><SortArrow>↑</SortArrow></Button>
                    <VRule />
                    <Button $w={111}>Select All (13)</Button><Button $w={100}>Deselect All</Button><Button $w={63}>Invert</Button>
                    <CountBadge>1 of 13 products selected</CountBadge>
                  </SortRow>
                </Card>

                <Card $tone="plain" $h={400} $mt={24}>
                  <CardTitle>Products (13)</CardTitle>
                  <ProductGrid>
                    {products.map((p) => (
                      <Product key={p.name}>
                        <ProductHead><Checkbox />{p.name}<Price>{p.price}</Price></ProductHead>
                        <ProductMeta>SKU: {p.sku}<s>{p.old}</s></ProductMeta>
                        {p.barcode && <ProductMeta>Barcode: {p.barcode}</ProductMeta>}
                        <ProductBadges>
                          <Pill $bg={p.stock ? "#0080ff" : "#ef4444"}>Stock: {p.stock}</Pill><Pill>{p.category}</Pill>
                        </ProductBadges>
                      </Product>
                    ))}
                    {nextRow.map(([name, price]) => (
                      <Product key={name}><ProductHead><Checkbox />{name}<Price>{price}</Price></ProductHead></Product>
                    ))}
                  </ProductGrid>
                </Card>
              </RightColumn>
            </Content>
            <Scrollbar>
              <svg width="16" height="12"><path d="M8 1.500 14.500 11h-13z" fill="#8b8b8b" stroke="#8b8b8b" strokeLinejoin="round" /></svg>
              <Thumb />
              <svg width="16" height="12"><path d="M8 10.500 14.500 1h-13z" fill="#8b8b8b" stroke="#8b8b8b" strokeLinejoin="round" /></svg>
            </Scrollbar>
          </Body>
        </Main>
      </Page>

      <Taskbar>
        <Weather><WeatherIcon /><CountBubble $bg="#ff98a0" $x={22} $y={-7} $w={26}>2</CountBubble></Weather>
        <Launcher>
          <AppCell $w={69}><StartIcon /></AppCell>
          <AppCell><SearchIcon /></AppCell>
          <AppCell><TaskViewIcon /></AppCell>
          <AppCell><CopilotIcon /></AppCell>
          <AppCell><StudioIcon /></AppCell>
          <AppCell><EdgeIcon /></AppCell>
          <AppCell><FaWhatsapp size={40} color="#25d366" /><CountBubble $bg="#f47c66" $x={32} $y={8} $w={28}>31</CountBubble></AppCell>
          <AppCell><FolderIcon /></AppCell>
          <AppCell><AiTile>Ai</AiTile></AppCell>
          <AppCell><ChromeLogo /></AppCell>
          <AppCell><StoreIcon /></AppCell>
          <AppCell><OutlookIcon /></AppCell>
          <AppCell><DragonIcon /></AppCell>
          <AppCell><XamppIcon /></AppCell>
          <AppCell><SnipIcon /></AppCell>
          <AppCell><ActiveCell /><ChromeLogo /><ProfileOnApp><ProfileDot $size={24}>M</ProfileDot></ProfileOnApp><RunMark $w={24} $color="#f47c66" /></AppCell>
          <AppCell><AnyDeskIcon /><RunMark $w={9} $color="#a79fa5" /></AppCell>
        </Launcher>
        <Tray>
          <TrayIcon $w={40}><ChevronUp size={24} /></TrayIcon>
          <TrayIcon $w={52}><CloudIcon /></TrayIcon>
          <TrayIcon $w={46}><TouchpadIcon /></TrayIcon>
          <TrayIcon $w={50}><WifiIcon /></TrayIcon>
          <TrayIcon $w={24}><SoundIcon /></TrayIcon>
          <TrayIcon $w={48}><BatteryIcon /></TrayIcon>
          <Clock>03:51<br />02-07-2025</Clock>
        </Tray>
      </Taskbar>
    </Screen>
  );
}
